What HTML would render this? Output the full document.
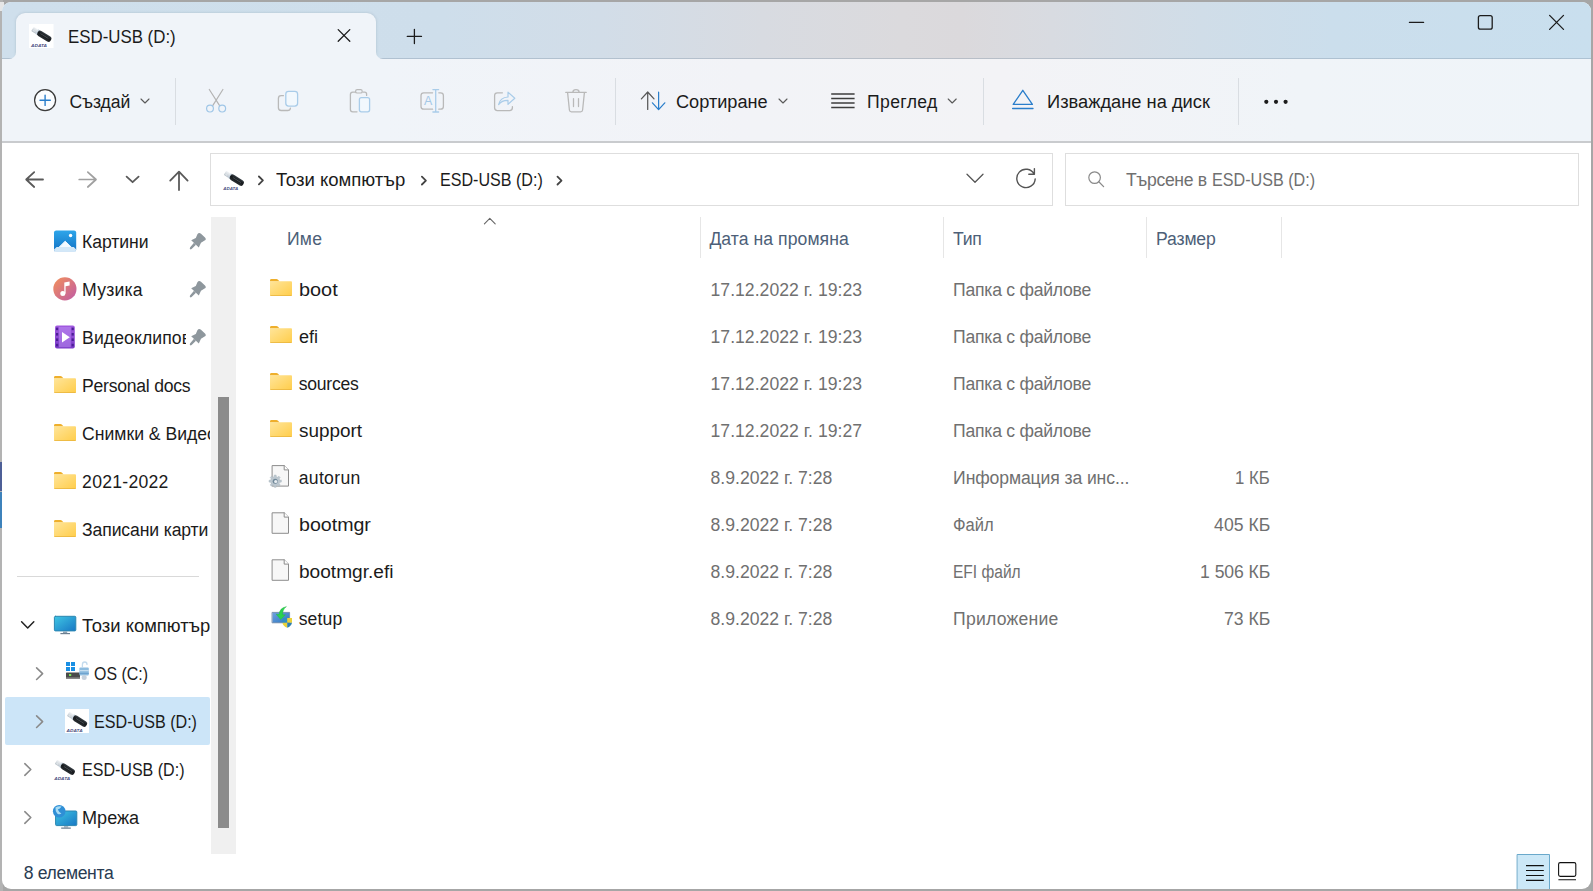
<!DOCTYPE html>
<html lang="bg">
<head>
<meta charset="utf-8">
<title>ESD-USB (D:)</title>
<style>
html,body{margin:0;padding:0;}
body{width:1593px;height:891px;overflow:hidden;background:#a6a6a6;font-family:"Liberation Sans","DejaVu Sans",sans-serif;font-size:17.6px;color:#1b1b1b;position:relative;}
.abs{position:absolute;}
.t{position:absolute;white-space:nowrap;line-height:24px;height:24px;transform-origin:0 50%;}
svg{position:absolute;overflow:visible;}
#win{position:absolute;left:2px;top:2px;width:1589px;height:887px;border-radius:9px;background:#fff;overflow:hidden;}
#titlebar{position:absolute;left:0;top:0;width:1589px;height:57px;background:linear-gradient(90deg,#cfdfec 0px,#cedeeb 440px,#d2dde8 600px,#d8dbe1 760px,#dbdadd 900px,#dbd9dc 960px,#d8dbe1 1050px,#d0dde8 1200px,#cbdeec 1330px,#c9dfee 1589px);}
#tab{position:absolute;left:14px;top:11px;width:360px;height:47px;background:#f0f4f9;border-radius:9px 9px 0 0;box-shadow:0 0 3px rgba(90,110,130,.28);}
#tbline{position:absolute;left:0;top:56px;width:1589px;height:1px;background:rgba(120,140,160,.35);}
.flare{position:absolute;top:50px;width:7px;height:7px;overflow:hidden;}
.flare i{position:absolute;width:14px;height:14px;border-radius:50%;box-shadow:0 0 0 8px #f0f4f9;top:-7px;}
#toolbar{position:absolute;left:0;top:57px;width:1589px;height:82px;background:linear-gradient(90deg,#f0f4f9 0,#f0f4f9 380px,#f2f3f7 750px,#f3f3f6 1000px,#f0f4f8 1300px,#eff4f9 1589px);border-bottom:2px solid #c9cbce;}
.sep{position:absolute;top:76px;width:1px;height:47px;background:#d9dde2;}
.sec{color:#707070;}
.hdr{color:#4d5f78;}
.colsep{position:absolute;top:215px;width:1px;height:41px;background:#e6e6e6;}
.box{position:absolute;top:151px;height:53px;border:1px solid #dedede;background:#fff;box-sizing:border-box;}
</style>
</head>
<body>
<!-- desktop slivers behind the window -->
<div class="abs" style="left:0;top:0;width:3px;height:891px;background:#b3b3b3;"></div>
<div class="abs" style="left:0;top:2px;width:4px;height:9px;background:#e6e6e6;"></div>
<div class="abs" style="left:0;top:462px;width:3px;height:29px;background:#4d5f97;"></div>
<div class="abs" style="left:0;top:492px;width:3px;height:36px;background:#3d82bb;"></div>

<div id="win">
  <div id="titlebar"></div>
  <div id="tbline"></div>
  <div id="tab"></div>
  <div class="flare" style="left:7px;"><i style="left:-7px;"></i></div>
  <div class="flare" style="left:374px;"><i style="left:0;"></i></div>
  <div id="toolbar"></div>
  <div class="sep" style="left:173px;"></div>
  <div class="sep" style="left:613px;"></div>
  <div class="sep" style="left:981px;"></div>
  <div class="sep" style="left:1236px;"></div>

  <!-- address + search boxes -->
  <div class="box" style="left:208px;width:843px;"></div>
  <div class="box" style="left:1063px;width:514px;"></div>

  <!-- nav selection, divider, scrollbar -->
  <div class="abs" style="left:3px;top:695px;width:205px;height:48px;background:#cce5f8;border-radius:2px;"></div>
  <div class="abs" style="left:15px;top:574px;width:182px;height:1px;background:#d9d9d9;"></div>
  <div class="abs" style="left:209px;top:215px;width:25px;height:637px;background:#f0f0f0;"></div>
  <div class="abs" style="left:216px;top:395px;width:11px;height:431px;background:#8b8b8b;"></div>

  <!-- column separators -->
  <div class="colsep" style="left:698px;"></div>
  <div class="colsep" style="left:941px;"></div>
  <div class="colsep" style="left:1144px;"></div>
  <div class="colsep" style="left:1279px;"></div>

  <!-- texts -->
  <div class="t" style="left:66.2px;top:22.6px;transform:scaleX(0.9364);font-size:18px;">ESD-USB (D:)</div>
  <div class="t" style="left:67.5px;top:87.7px;letter-spacing:-0.09px;">Създай</div>
  <div class="t" style="left:674.4px;top:87.7px;transform:scaleX(1.0320);">Сортиране</div>
  <div class="t" style="left:865.0px;top:87.7px;letter-spacing:0.35px;">Преглед</div>
  <div class="t" style="left:1044.7px;top:87.7px;transform:scaleX(1.0386);">Изваждане на диск</div>
  <div class="t" style="left:274.1px;top:165.6px;transform:scaleX(1.0529);">Този компютър</div>
  <div class="t" style="left:437.9px;top:165.6px;transform:scaleX(0.9144);">ESD-USB (D:)</div>
  <div class="t sec" style="left:1123.9px;top:165.6px;letter-spacing:-0.33px;">Търсене в</div>
  <div class="t sec" style="left:1210.2px;top:165.6px;transform:scaleX(0.9171);">ESD-USB (D:)</div>
  <div class="t" style="left:80.1px;top:227.6px;letter-spacing:-0.06px;">Картини</div>
  <div class="t" style="left:80.1px;top:275.6px;letter-spacing:0.22px;">Музика</div>
  <div class="t" style="left:80.1px;top:323.6px;letter-spacing:0.09px;width:104px;overflow:hidden;">Видеоклипове</div>
  <div class="t" style="left:80.1px;top:371.6px;letter-spacing:-0.25px;">Personal docs</div>
  <div class="t" style="left:80.1px;top:419.6px;width:127.8px;overflow:hidden;">Снимки &amp; Видео</div>
  <div class="t" style="left:80.1px;top:467.6px;letter-spacing:0.26px;">2021-2022</div>
  <div class="t" style="left:80.1px;top:515.6px;letter-spacing:-0.13px;">Записани карти</div>
  <div class="t" style="left:80.1px;top:611.6px;transform:scaleX(1.0456);width:127.8px;overflow:hidden;">Този компютър</div>
  <div class="t" style="left:91.5px;top:659.6px;transform:scaleX(0.9057);">OS (C:)</div>
  <div class="t" style="left:91.5px;top:707.6px;transform:scaleX(0.9162);">ESD-USB (D:)</div>
  <div class="t" style="left:80.2px;top:755.6px;transform:scaleX(0.9117);">ESD-USB (D:)</div>
  <div class="t" style="left:80.1px;top:803.6px;transform:scaleX(1.0289);">Мрежа</div>
  <div class="t hdr" style="left:284.9px;top:225.0px;letter-spacing:0.33px;">Име</div>
  <div class="t hdr" style="left:707.4px;top:225.0px;letter-spacing:0.06px;">Дата на промяна</div>
  <div class="t hdr" style="left:950.9px;top:225.0px;letter-spacing:-0.22px;">Тип</div>
  <div class="t hdr" style="left:1154.1px;top:225.0px;letter-spacing:-0.16px;">Размер</div>
  <div class="t" style="left:296.6px;top:276.0px;transform:scaleX(1.1299);">boot</div>
  <div class="t sec" style="left:708.5px;top:276.0px;letter-spacing:0.03px;">17.12.2022 г. 19:23</div>
  <div class="t sec" style="left:951.1px;top:276.0px;letter-spacing:-0.25px;">Папка с файлове</div>
  <div class="t" style="left:296.7px;top:323.0px;transform:scaleX(1.0272);">efi</div>
  <div class="t sec" style="left:708.5px;top:323.0px;letter-spacing:0.03px;">17.12.2022 г. 19:23</div>
  <div class="t sec" style="left:951.1px;top:323.0px;letter-spacing:-0.25px;">Папка с файлове</div>
  <div class="t" style="left:296.7px;top:370.0px;letter-spacing:-0.25px;">sources</div>
  <div class="t sec" style="left:708.5px;top:370.0px;letter-spacing:0.03px;">17.12.2022 г. 19:23</div>
  <div class="t sec" style="left:951.1px;top:370.0px;letter-spacing:-0.25px;">Папка с файлове</div>
  <div class="t" style="left:296.6px;top:417.0px;transform:scaleX(1.0752);">support</div>
  <div class="t sec" style="left:708.5px;top:417.0px;letter-spacing:0.03px;">17.12.2022 г. 19:27</div>
  <div class="t sec" style="left:951.1px;top:417.0px;letter-spacing:-0.25px;">Папка с файлове</div>
  <div class="t" style="left:296.7px;top:464.0px;letter-spacing:0.32px;">autorun</div>
  <div class="t sec" style="left:708.5px;top:464.0px;letter-spacing:0.01px;">8.9.2022 г. 7:28</div>
  <div class="t sec" style="left:951.1px;top:464.0px;letter-spacing:-0.11px;">Информация за инс...</div>
  <div class="t sec" style="left:1233.1px;top:464.0px;transform:scaleX(0.9515);">1 КБ</div>
  <div class="t" style="left:296.6px;top:511.0px;transform:scaleX(1.1139);">bootmgr</div>
  <div class="t sec" style="left:708.5px;top:511.0px;letter-spacing:0.01px;">8.9.2022 г. 7:28</div>
  <div class="t sec" style="left:951.2px;top:511.0px;transform:scaleX(0.9407);">Файл</div>
  <div class="t sec" style="left:1212.1px;top:511.0px;letter-spacing:0.03px;">405 КБ</div>
  <div class="t" style="left:296.6px;top:558.0px;transform:scaleX(1.0856);">bootmgr.efi</div>
  <div class="t sec" style="left:708.5px;top:558.0px;letter-spacing:0.01px;">8.9.2022 г. 7:28</div>
  <div class="t sec" style="left:951.2px;top:558.0px;transform:scaleX(0.8835);">EFI файл</div>
  <div class="t sec" style="left:1198.1px;top:558.0px;letter-spacing:-0.07px;">1 506 КБ</div>
  <div class="t" style="left:296.7px;top:605.0px;letter-spacing:0.14px;">setup</div>
  <div class="t sec" style="left:708.5px;top:605.0px;letter-spacing:0.01px;">8.9.2022 г. 7:28</div>
  <div class="t sec" style="left:951.1px;top:605.0px;letter-spacing:0.22px;">Приложение</div>
  <div class="t sec" style="left:1222.1px;top:605.0px;letter-spacing:-0.02px;">73 КБ</div>
  <div class="t" style="left:21.8px;top:858.5px;letter-spacing:-0.36px;color:#2a3c52;">8 елемента</div>

  <!-- icons -->
  <svg id="ic" width="1593" height="891" viewBox="0 0 1593 891" style="left:-2px;top:-2px;" fill="none" stroke-linecap="round" stroke-linejoin="round">
<defs>
  <linearGradient id="gFold" x1="0" y1="0" x2="1" y2="1"><stop offset="0" stop-color="#ffe59a"/><stop offset="1" stop-color="#ffcd4a"/></linearGradient>
  <linearGradient id="gUsb" x1="0" y1="0" x2="0" y2="1"><stop offset="0" stop-color="#3a4248"/><stop offset="0.45" stop-color="#15181b"/><stop offset="1" stop-color="#2a2f33"/></linearGradient>
  <linearGradient id="gCap" x1="0" y1="0" x2="0" y2="1"><stop offset="0" stop-color="#f4f6f8"/><stop offset="1" stop-color="#b9c2ca"/></linearGradient>
  <linearGradient id="gPic" x1="0" y1="0" x2="0" y2="1"><stop offset="0" stop-color="#2ea6ea"/><stop offset="1" stop-color="#1272c4"/></linearGradient>
  <linearGradient id="gMus" x1="0" y1="0" x2="1" y2="1"><stop offset="0" stop-color="#f3915a"/><stop offset="1" stop-color="#bf5aa6"/></linearGradient>
  <linearGradient id="gVid" x1="0" y1="0" x2="0" y2="1"><stop offset="0" stop-color="#a25ae0"/><stop offset="1" stop-color="#7a3cc8"/></linearGradient>
  <linearGradient id="gMon" x1="0" y1="0" x2="1" y2="1"><stop offset="0" stop-color="#3fc6e4"/><stop offset="1" stop-color="#1877c4"/></linearGradient>
  <linearGradient id="gScr" x1="0" y1="0" x2="1" y2="1"><stop offset="0" stop-color="#6fa0e0"/><stop offset="1" stop-color="#2a78c0"/></linearGradient>
  <!-- folder 22x17 -->
  <g id="fold" stroke="none">
    <path d="M0 1.4Q0 0 1.4 0H6.4Q7.4 0 8 .7L9.6 2.6H0Z" fill="#eeaf2c"/>
    <path d="M0 2.2H21Q22 2.2 22 3.2V16Q22 17 21 17H1Q0 17 0 16Z" fill="url(#gFold)"/>
    <path d="M0 16.2H22V16Q22 17 21 17H1Q0 17 0 16Z" fill="#e9b43c"/>
  </g>
  <!-- usb stick, 24x24 box -->
  <g id="usb" stroke="none">
    <g transform="rotate(32 12 10)">
      <rect x="1.4" y="7.5" width="7" height="5" rx="0.8" fill="url(#gCap)"/>
      <rect x="2.6" y="8.5" width="2" height="1" fill="#e3e8ec"/><rect x="2.6" y="10.5" width="2" height="1" fill="#e3e8ec"/>
      <rect x="6.6" y="7.3" width="2.2" height="5.4" fill="#c9d6e2"/>
      <rect x="7.6" y="7" width="15.4" height="6" rx="2.4" fill="url(#gUsb)"/>
      <rect x="10.5" y="9.5" width="9.5" height="0.6" fill="#565e64"/>
    </g>
  </g>
  <!-- small chevrons -->
  <path id="chevD" d="M-4 -2L0 2L4 -2" stroke="#5a5a5a" stroke-width="1.1"/>
  <path id="chevR" d="M-3 -5.8L3 0L-3 5.8" stroke="#8a8a8a" stroke-width="1.6"/>
  <path id="crumb" d="M-2.1 -3.9L1.9 0L-2.1 3.9" stroke="#444" stroke-width="1.8"/>
  <!-- pin -->
  <g id="pin" stroke="none" fill="#8e979d">
    <path d="M7 1.6Q8.6 -.6 10.6 1.2L14.6 4.8Q16.4 6.6 14.2 8L10.6 10.2L8.4 15L.8 7.6L5.4 5.4Z"/>
    <path d="M3.6 10.2L5.6 12.2L1.2 16.4Q.2 17.2 -.4 16.4Q-1 15.6 -.2 14.6Z"/>
  </g>
  <!-- blank document 17x21.5 -->
  <g id="doc">
    <path d="M.5 .5H12.2L16.5 4.8V21H.5Z" fill="#f7f7f7" stroke="#8c8c8c" stroke-width="1" stroke-linejoin="miter"/>
    <path d="M12.2 .5V4.8H16.5" fill="#ffffff" stroke="#8c8c8c" stroke-width="1" stroke-linejoin="miter"/>
  </g>
</defs>

<!-- ===== title bar ===== -->
<rect x="29" y="24" width="24.5" height="24" fill="#fff" stroke="none"/>
<use href="#usb" x="29.5" y="24.5"/>
<text x="31" y="47" font-family="'Liberation Sans',sans-serif" font-size="3.4" font-weight="bold" font-style="italic" fill="#474c80" stroke="none" textLength="16" lengthAdjust="spacingAndGlyphs">ADATA</text>
<path d="M338.2 29.6L349.8 41.3M349.8 29.6L338.2 41.3" stroke="#1c1c1c" stroke-width="1.3"/>
<path d="M407.3 36.4H421.5M414.4 29.3V43.5" stroke="#1c1c1c" stroke-width="1.3"/>
<path d="M1409.4 22.4H1423.6" stroke="#1c1c1c" stroke-width="1.2"/>
<rect x="1478.4" y="15.6" width="13.8" height="13.6" rx="2" stroke="#1c1c1c" stroke-width="1.3"/>
<path d="M1549.6 15.4L1563.5 29.4M1563.5 15.4L1549.6 29.4" stroke="#1c1c1c" stroke-width="1.3"/>

<!-- ===== toolbar ===== -->
<circle cx="45.1" cy="100.2" r="10.5" fill="#fbfdff" stroke="#3c3c3c" stroke-width="1.25"/>
<path d="M40 100.2H50.3M45.1 95.1V105.4" stroke="#2a7ecb" stroke-width="1.4"/>
<use href="#chevD" x="145" y="101"/>
<!-- cut -->
<path d="M209.3 89.5L219.6 105.6M222.9 89.5L212.7 105.6" stroke="#b4b4b4" stroke-width="1.2"/>
<circle cx="210" cy="108.6" r="3.4" stroke="#9fc6e7" stroke-width="1.2"/><circle cx="222.2" cy="108.6" r="3.4" stroke="#9fc6e7" stroke-width="1.2"/>
<!-- copy -->
<path d="M283.4 95.7H281.2Q278.4 95.7 278.4 98.5V107.7Q278.4 110.5 281.2 110.5H287.6Q290.2 110.5 290.4 108.2" stroke="#b9b9b9" stroke-width="1.3"/>
<rect x="285.8" y="91.3" width="11.8" height="14.8" rx="2.8" fill="#f2f8fd" stroke="#a9cce9" stroke-width="1.3"/>
<!-- paste -->
<path d="M356 92.2H352.8Q350.4 92.2 350.4 94.6V109.4Q350.4 111.8 352.8 111.8H357M363 92.2H364.6Q366.6 92.2 366.6 94.2V95.4" stroke="#b9b9b9" stroke-width="1.3"/>
<rect x="355.6" y="89.6" width="6.6" height="3.4" rx="1.6" stroke="#b9b9b9" stroke-width="1.2" fill="#f0f4f9"/>
<rect x="359.4" y="97.6" width="10.2" height="14.2" rx="2" fill="#f2f8fd" stroke="#a9cce9" stroke-width="1.3"/>
<!-- rename -->
<path d="M432.6 92.8H423.8Q421 92.8 421 95.6V106.4Q421 109.2 423.8 109.2H432.6M438.8 92.8H440.6Q443.4 92.8 443.4 95.6V106.4Q443.4 109.2 440.6 109.2H438.8" stroke="#b9b9b9" stroke-width="1.3"/>
<path d="M435.7 89.8V111.8M432.9 89.6H438.6M432.9 112H438.6" stroke="#a9cce9" stroke-width="1.3"/>
<text x="423.9" y="105.1" font-family="'Liberation Sans',sans-serif" font-size="12.4" fill="#a4c8e6" stroke="none">A</text>
<!-- share -->
<path d="M502.4 92.8H497.4Q494.6 92.8 494.6 95.6V107.8Q494.6 110.6 497.4 110.6H509.6Q512.4 110.6 512.4 107.8V106.6" stroke="#b9b9b9" stroke-width="1.3"/>
<path d="M498.6 104.6Q500.2 97.4 508 97V92.2L514.8 98.2L508 104.4V100.4Q502 100.2 498.6 104.6Z" stroke="#a9cce9" stroke-width="1.2"/>
<!-- delete -->
<path d="M565.8 92.4H586.2M572.8 92.2Q573 89.6 576 89.6Q579 89.6 579.2 92.2M567.6 92.6L569.4 110Q569.6 111.8 571.4 111.8H580.6Q582.4 111.8 582.6 110L584.4 92.6M573.5 98.6V106.6M578.5 98.6V106.6" stroke="#b9b9b9" stroke-width="1.3"/>
<!-- sort -->
<path d="M647.7 109.4V92.2M641.4 98.9L647.7 92L654 98.9" stroke="#585858" stroke-width="1.25"/>
<path d="M658.6 92.2V109.4M652.4 102.8L658.6 109.6L664.8 102.8" stroke="#2a7ecb" stroke-width="1.25"/>
<use href="#chevD" x="783" y="101"/>
<!-- view -->
<path d="M831.2 94H854.6M831.2 98.5H854.6M831.2 103H854.6M831.2 107.5H854.6" stroke="#3e3e3e" stroke-width="1.3" stroke-linecap="butt"/>
<use href="#chevD" x="952.2" y="101"/>
<!-- eject -->
<path d="M1022.8 90.3L1032.4 104.4H1013.2Z" stroke="#2a7ecb" stroke-width="1.3"/>
<path d="M1012.6 108.5H1033" stroke="#2a7ecb" stroke-width="1.3"/>
<!-- more -->
<g fill="#1c1c1c" stroke="none"><circle cx="1266.3" cy="101.8" r="2.1"/><circle cx="1276" cy="101.8" r="2.1"/><circle cx="1285.6" cy="101.8" r="2.1"/></g>
<!-- ===== address row ===== -->
<path d="M43 179.5H26.4M34.2 172.1L26.2 179.5L34.2 187" stroke="#5a5a5a" stroke-width="1.8"/>
<path d="M79.2 179.5H95.8M87.8 172.1L96 179.5L87.8 187" stroke="#a0a0a0" stroke-width="1.7"/>
<path d="M126.6 176.6L132.6 182.2L138.6 176.6" stroke="#5a5a5a" stroke-width="1.8"/>
<path d="M179 190V171.8M170.2 180.6L179 171.6L187.6 180.6" stroke="#5a5a5a" stroke-width="1.8"/>
<use href="#usb" x="222" y="168.4"/>
<text x="223.2" y="190.4" font-family="'Liberation Sans',sans-serif" font-size="3.3" font-weight="bold" font-style="italic" fill="#474c80" stroke="none" textLength="15" lengthAdjust="spacingAndGlyphs">ADATA</text>
<use href="#crumb" x="261" y="180.4"/>
<use href="#crumb" x="424" y="180.6"/>
<use href="#crumb" x="559.6" y="180.6"/>
<path d="M967 174.2L975 182.2L983 174.2" stroke="#555" stroke-width="1.3"/>
<path d="M1034.2 174.2A9.2 9.2 0 1 0 1035.2 178.9M1034.4 168.6V174.2H1028.8" stroke="#555" stroke-width="1.4"/>
<circle cx="1094.6" cy="177.6" r="5.8" stroke="#8a8a8a" stroke-width="1.2"/><path d="M1098.8 181.8L1103.6 186.6" stroke="#8a8a8a" stroke-width="1.3"/>

<!-- ===== nav pane ===== -->
<!-- pictures -->
<rect x="54" y="230.4" width="22.2" height="21.4" rx="2.2" fill="url(#gPic)" stroke="none"/>
<path d="M55.2 251L65.2 241.2L75.2 251Z" fill="#f4faff" stroke="#f4faff" stroke-width="1" />
<path d="M54 249.4L56.6 247H73.8L76.2 249.4V249.6Q76.2 251.8 74 251.8H56.2Q54 251.8 54 249.6Z" fill="#d3e8f8" stroke="none"/>
<circle cx="70.6" cy="235.5" r="1.7" fill="#fff" stroke="none"/>
<!-- music -->
<circle cx="64.9" cy="288.9" r="11.6" fill="url(#gMus)" stroke="none"/>
<g fill="#fff" stroke="none"><circle cx="62.8" cy="293.6" r="2.5"/><path d="M64.3 293.6V282.6L69.6 281.4V285.4L65.6 286.2V293.6Z"/></g>
<!-- videos -->
<rect x="55" y="325.6" width="19.8" height="23" rx="2" fill="url(#gVid)" stroke="none"/>
<rect x="59" y="327" width="11.8" height="20.2" fill="#b98cf0" stroke="none" opacity=".55"/>
<g fill="#4c1f96" stroke="none"><rect x="56" y="327.6" width="2.2" height="2.6"/><rect x="56" y="333" width="2.2" height="2.6"/><rect x="56" y="338.4" width="2.2" height="2.6"/><rect x="56" y="343.8" width="2.2" height="2.6"/><rect x="71.6" y="327.6" width="2.2" height="2.6"/><rect x="71.6" y="333" width="2.2" height="2.6"/><rect x="71.6" y="338.4" width="2.2" height="2.6"/><rect x="71.6" y="343.8" width="2.2" height="2.6"/></g>
<path d="M62 332V342.6L69.8 337.3Z" fill="#fff" stroke="none"/>
<!-- pins -->
<use href="#pin" x="190.4" y="232.6"/><use href="#pin" x="190.4" y="280.6"/><use href="#pin" x="190.4" y="328.6"/>
<!-- nav folders -->
<use href="#fold" x="54" y="376" transform="translate(0 0)"/><use href="#fold" x="54" y="424"/><use href="#fold" x="54" y="472"/><use href="#fold" x="54" y="520"/>
<!-- this pc -->
<path d="M21.6 621.8L27.7 628L33.8 621.8" stroke="#222" stroke-width="1.5"/>
<rect x="54.4" y="616.3" width="21.4" height="14.6" rx="1" fill="url(#gMon)" stroke="#2b86b0" stroke-width="1"/>
<path d="M63 631.4H67.2V633H63Z" fill="#8fa3b3" stroke="none"/><path d="M60.4 633.6H70" stroke="#6c7f90" stroke-width="1.2" stroke-linecap="butt"/>
<!-- OS (C:) -->
<use href="#chevR" x="39.6" y="673.7"/>
<g stroke="none"><rect x="66" y="662" width="4" height="4" fill="#1a8fe3"/><rect x="71" y="662" width="4" height="4" fill="#1a8fe3"/><rect x="66" y="667" width="4" height="4" fill="#1a8fe3"/><rect x="71" y="667" width="4" height="4" fill="#1a8fe3"/>
<rect x="66" y="672.4" width="14" height="6.4" rx=".6" fill="#4a4a4a"/><rect x="66" y="677.4" width="14" height="1.4" fill="#8a8a8a"/><rect x="69" y="674" width="2.2" height="2" fill="#7be05a"/>
<rect x="79.4" y="667.6" width="9.4" height="8" rx="1" fill="#8ebcdf"/><rect x="79.4" y="670" width="9.4" height="1.2" fill="#c6def0"/><rect x="79.4" y="672.8" width="9.4" height="1.2" fill="#6fa3cf"/>
<circle cx="84.2" cy="677.4" r="2.5" fill="#c5d0dc"/></g>
<path d="M82.4 667.4V664.6Q82.4 662 84.8 662Q87 662 87 664.4" stroke="#c3dbee" stroke-width="1.3"/>
<!-- ESD-USB selected -->
<use href="#chevR" x="39.6" y="721.7"/>
<rect x="65" y="709" width="24" height="24" fill="#fff" stroke="none"/>
<use href="#usb" x="65.2" y="709.4"/>
<text x="66.6" y="731.8" font-family="'Liberation Sans',sans-serif" font-size="3.4" font-weight="bold" font-style="italic" fill="#474c80" stroke="none" textLength="16" lengthAdjust="spacingAndGlyphs">ADATA</text>
<!-- ESD-USB 2 -->
<use href="#chevR" x="27.8" y="769.5"/>
<use href="#usb" x="53" y="757.4"/>
<text x="54.2" y="779.8" font-family="'Liberation Sans',sans-serif" font-size="3.4" font-weight="bold" font-style="italic" fill="#474c80" stroke="none" textLength="16" lengthAdjust="spacingAndGlyphs">ADATA</text>
<!-- network -->
<use href="#chevR" x="27.8" y="817.5"/>
<rect x="55.6" y="811" width="21.2" height="14.6" rx="1" fill="url(#gMon)" stroke="#2b86b0" stroke-width="1"/>
<path d="M64 826.2H68.2V827.6H64Z" fill="#8fa3b3" stroke="none"/><path d="M61.2 828.2H70.8" stroke="#6c7f90" stroke-width="1.2" stroke-linecap="butt"/>
<circle cx="59.2" cy="811.3" r="6.3" fill="#2f8fd6" stroke="none"/>
<path d="M55.4 807.6Q58.6 805.6 61.6 806.6Q60 809 57.8 809.4Q58.8 811.8 61.4 813.6Q59.4 815 57.2 813.4Q55.2 811.2 55.4 807.6Z" fill="#a8dcf4" stroke="none"/>

<!-- ===== file list ===== -->
<path d="M484.4 223.8L489.8 218.4L495.2 223.8" stroke="#666" stroke-width="1.1"/>
<use href="#fold" x="270" y="279"/><use href="#fold" x="270" y="326"/><use href="#fold" x="270" y="373"/><use href="#fold" x="270" y="420"/>
<!-- autorun -->
<use href="#doc" x="272" y="465.1"/>
<g stroke="none"><path d="M281.34 480.33L281.34 482.07L279.66 482.34L279.16 483.55L280.15 484.93L278.93 486.15L277.55 485.16L276.34 485.66L276.07 487.34L274.33 487.34L274.06 485.66L272.85 485.16L271.47 486.15L270.25 484.93L271.24 483.55L270.74 482.34L269.06 482.07L269.06 480.33L270.74 480.06L271.24 478.85L270.25 477.47L271.47 476.25L272.85 477.24L274.06 476.74L274.33 475.06L276.07 475.06L276.34 476.74L277.55 477.24L278.93 476.25L280.15 477.47L279.16 478.85L279.66 480.06Z" fill="#bcc7cf" stroke="#aab6bf" stroke-width=".5" stroke-linejoin="round"/>
<circle cx="275.2" cy="481.2" r="2.5" fill="#6f8798"/><circle cx="275.7" cy="481.5" r="1.6" fill="#e9eef2"/></g>
<use href="#doc" x="272" y="512.3"/>
<use href="#doc" x="272" y="559.3"/>
<!-- setup -->
<rect x="272.4" y="612.4" width="17.2" height="10.4" fill="url(#gScr)" stroke="#6d87a6" stroke-width=".8"/>
<path d="M286 606.8Q279.4 608 279.2 614.6L276.2 614.2L280.8 619.6L285.4 614.8L282.6 614.8Q282.4 609.6 286 606.8Z" fill="#2ad24e" stroke="#25b845" stroke-width=".5"/>
<g stroke="none"><path d="M287.2 618H282.4V622.8H287.2Z" fill="#2f8fc4"/><path d="M287.2 618H292V622.8H287.2Z" fill="#ead23a"/><path d="M282.4 622.8H287.2V627.8Q283.2 626.4 282.4 622.8Z" fill="#ead23a"/><path d="M292 622.8H287.2V627.8Q291.2 626.4 292 622.8Z" fill="#2f7fb0"/></g>

<!-- ===== status bar buttons ===== -->
<rect x="1517.5" y="854.5" width="32" height="35" fill="#cce8f7" stroke="#6aa9cb" stroke-width="1"/>
<path d="M1526 865.6H1543.8M1526 870.5H1543.8M1526 875.5H1543.8M1526 880.4H1543.8" stroke="#111" stroke-width="1.1" stroke-linecap="butt"/>
<rect x="1558.6" y="862.6" width="17.2" height="13.8" rx="1.6" stroke="#111" stroke-width="1.1"/>
<path d="M1558.4 879.7H1576" stroke="#111" stroke-width="1.1" stroke-linecap="butt"/>
</svg>

</div>
</body>
</html>
